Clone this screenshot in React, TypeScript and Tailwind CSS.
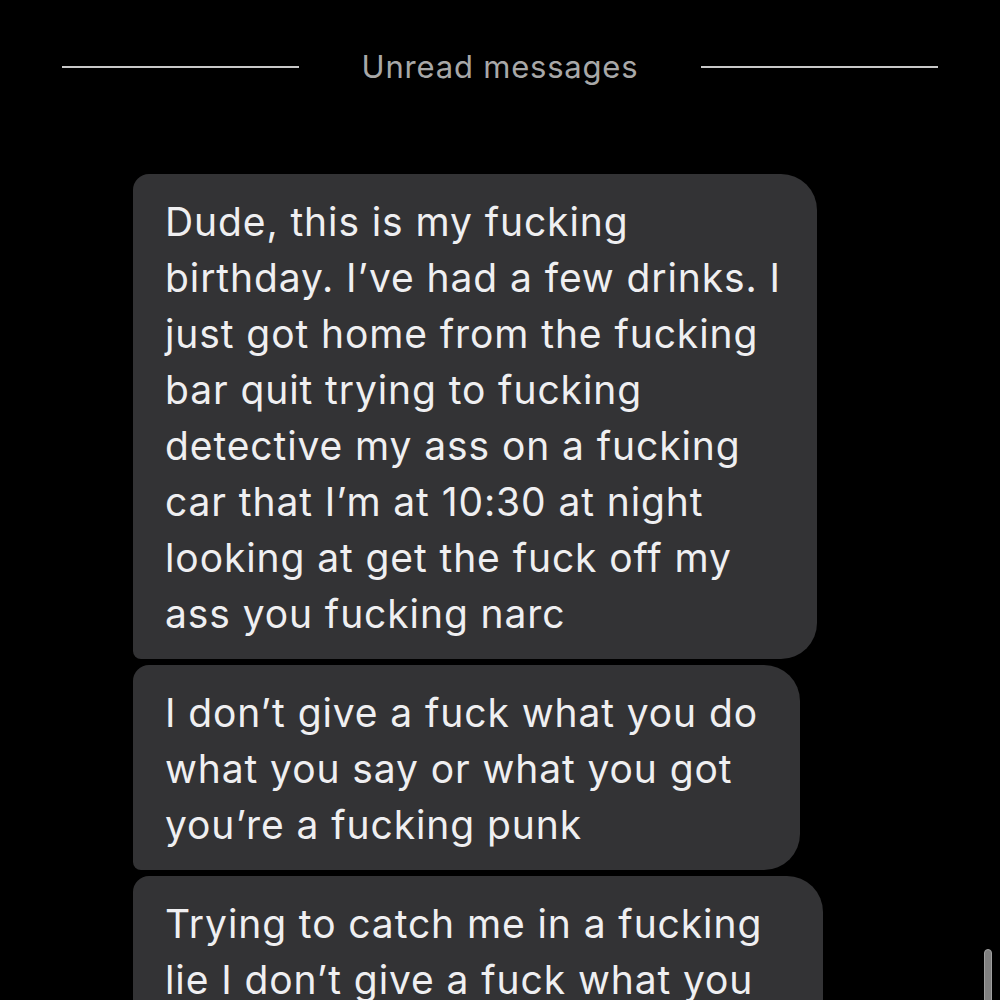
import React from "react";

const messages = [
  {
    width: "w-[684px]",
    lines: [
      "Dude, this is my fucking",
      "birthday. I\u2019ve had a few drinks. I",
      "just got home from the fucking",
      "bar quit trying to fucking",
      "detective my ass on a fucking",
      "car that I\u2019m at 10:30 at night",
      "looking at get the fuck off my",
      "ass you fucking narc",
    ],
  },
  {
    width: "w-[667px]",
    lines: [
      "I don\u2019t give a fuck what you do",
      "what you say or what you got",
      "you\u2019re a fucking punk",
    ],
  },
  {
    width: "w-[690px]",
    lines: [
      "Trying to catch me in a fucking",
      "lie I don\u2019t give a fuck what you",
      "do",
    ],
  },
];

export default function App() {
  return (
    <div
      className="relative h-[1000px] w-[1000px] overflow-hidden bg-black"
      style={{ fontFamily: "Inter, 'Liberation Sans', sans-serif" }}
    >
      <div className="flex items-center pt-[47px] px-[62px]">
        <div className="h-[2px] flex-1 bg-[#c8c8c8]" />
        <span className="px-[63px] text-[31px] leading-[40px] tracking-[0.8px] text-[#a8a8a8]">Unread messages</span>
        <div className="h-[2px] flex-1 bg-[#c8c8c8]" />
      </div>

      <div className="mt-[87px] flex flex-col gap-[6px] pl-[133px]">
        {messages.map((m, i) => (
          <div
            key={i}
            className={`${m.width} rounded-tl-[16px] rounded-bl-[8px] rounded-r-[36px] bg-[#333335] px-[32px] pt-[20px] pb-[17px] text-[39px] leading-[56px] tracking-[0.9px] text-[#efeff1]`}
          >
            {m.lines.map((l, j) => (
              <div key={j} className="whitespace-nowrap">
                {l}
              </div>
            ))}
          </div>
        ))}
      </div>

      <div className="absolute left-[984px] top-[949px] h-[70px] w-[8px] rounded-full border border-[#a0a0a0] bg-[#808080]" />
    </div>
  );
}
